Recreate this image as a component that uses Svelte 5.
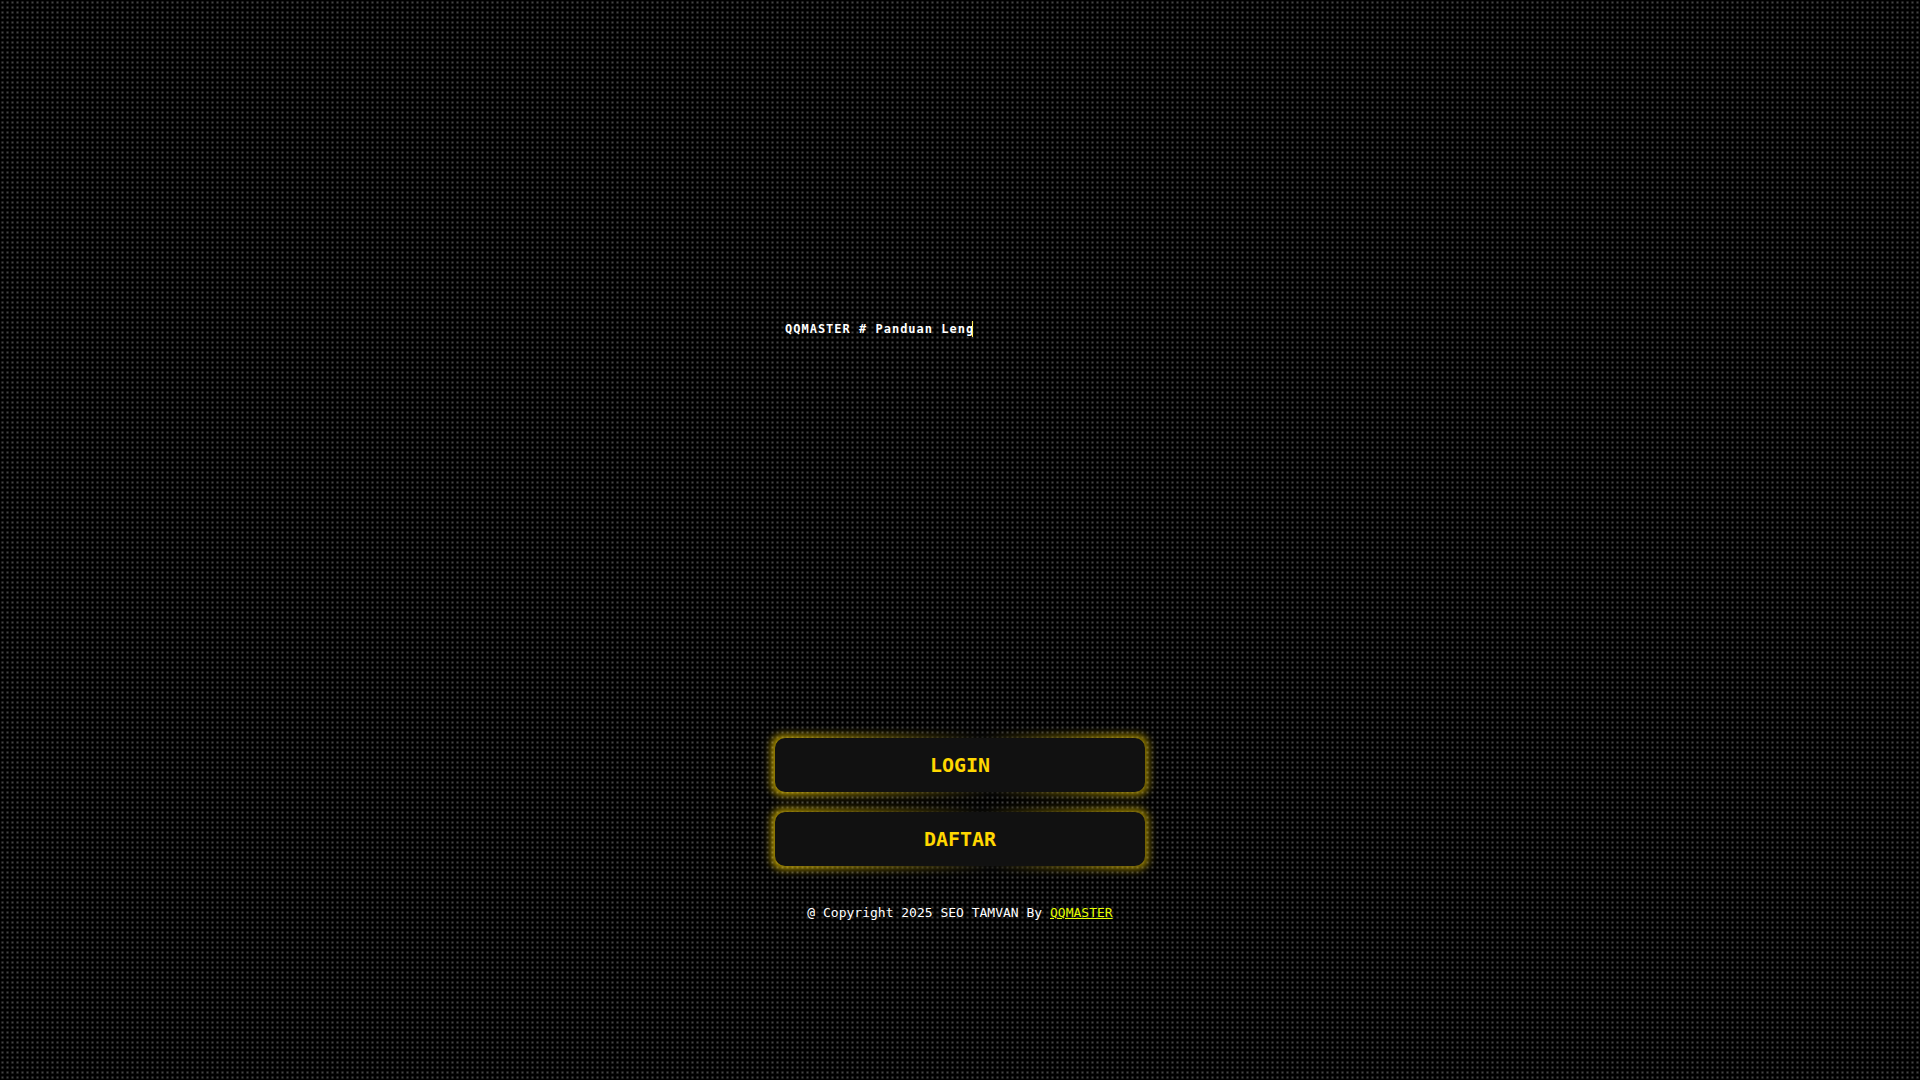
<script lang="ts">
  const heading = 'QQMASTER # Panduan Leng'

  const actions = [
    { label: 'LOGIN', href: '#login' },
    { label: 'DAFTAR', href: '#daftar' },
  ]
</script>

<main class="page">
  <div class="content">
    <h1 class="typing">{heading}</h1>

    <nav class="actions">
      {#each actions as action}
        <a class="glow-btn" href={action.href}>{action.label}</a>
      {/each}
    </nav>

    <footer class="copyright">
      @ Copyright 2025 SEO TAMVAN By <a href="#home">QQMASTER</a>
    </footer>
  </div>
</main>

<style>
  :global(body) {
    background-color: #000;
    background-image: radial-gradient(#444, transparent 2px);
    background-size: 5px 5px;
    font-family: "DejaVu Sans Mono", monospace;
  }

  .page {
    display: flex;
    justify-content: center;
    min-height: 100vh;
    box-sizing: border-box;
    padding: 321px 16px 0;
  }

  .content {
    width: 100%;
    max-width: 370px;
  }

  .typing {
    width: 187px;
    margin: 0 10px;
    border-right: 1px solid #ffe95c;
    color: #fff;
    font-size: 12px;
    line-height: 16px;
    letter-spacing: 1px;
    white-space: nowrap;
    overflow: hidden;
  }

  .actions {
    display: flex;
    flex-direction: column;
    gap: 20px;
    margin-top: 401px;
  }

  .glow-btn {
    position: relative;
    z-index: 0;
    padding: 15px;
    border-radius: 10px;
    color: #ffd700;
    font-size: 20px;
    font-weight: bold;
    line-height: 24px;
    text-align: center;
    text-decoration: none;
  }

  .glow-btn::before {
    content: '';
    position: absolute;
    inset: -3px;
    z-index: -1;
    border-radius: 10px;
    background: linear-gradient(80deg, #ffd700, #0a0a0a 57%, #c9aa00 92%);
    filter: blur(4px);
    opacity: 0.8;
  }

  .glow-btn::after {
    content: '';
    position: absolute;
    inset: 0;
    z-index: -1;
    border-radius: 10px;
    background: #111;
  }

  .copyright {
    margin-top: 37px;
    color: #fff;
    font-size: 13px;
    line-height: 20px;
    text-align: center;
  }

  .copyright a {
    color: #e5ff00;
  }
</style>
